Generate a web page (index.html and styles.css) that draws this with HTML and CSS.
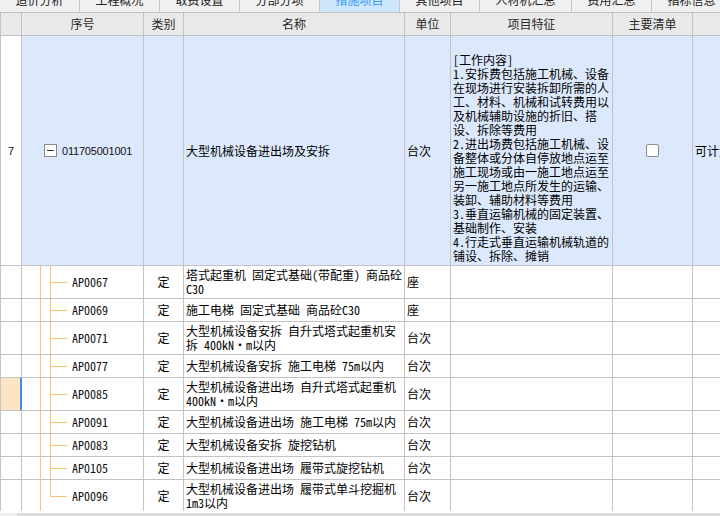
FILE: index.html
```html
<!DOCTYPE html>
<html lang="zh-CN">
<head>
<meta charset="utf-8">
<title>措施项目</title>
<link rel="stylesheet" href="styles.css">
</head>
<body>
<div class="tabs">
  <div class="tab"><span>造价分析</span></div>
  <div class="tab"><span>工程概况</span></div>
  <div class="tab"><span>取费设置</span></div>
  <div class="tab"><span>分部分项</span></div>
  <div class="tab active"><span>措施项目</span></div>
  <div class="tab"><span>其他项目</span></div>
  <div class="tab wide"><span>人材机汇总</span></div>
  <div class="tab"><span>费用汇总</span></div>
  <div class="tab"><span>指标信息</span></div>
</div>
<div class="sheet">
  <div class="row head">
    <div class="c"></div>
    <div class="c">序号</div>
    <div class="c">类别</div>
    <div class="c">名称</div>
    <div class="c">单位</div>
    <div class="c">项目特征</div>
    <div class="c">主要清单</div>
    <div class="c"></div>
  </div>
  <div class="row parent">
    <div class="c num">7</div>
    <div class="c ptree"><span class="toggle"></span><span class="pcode">011705001001</span></div>
    <div class="c"></div>
    <div class="c txt">大型机械设备进出场及安拆</div>
    <div class="c txt">台次</div>
    <div class="c txt feat">[工作内容]<br>1.安拆费包括施工机械、设备<br>在现场进行安装拆卸所需的人<br>工、材料、机械和试转费用以<br>及机械辅助设施的折旧、搭<br>设、拆除等费用<br>2.进出场费包括施工机械、设<br>备整体或分体自停放地点运至<br>施工现场或由一施工地点运至<br>另一施工地点所发生的运输、<br>装卸、辅助材料等费用<br>3.垂直运输机械的固定装置、<br>基础制作、安装<br>4.行走式垂直运输机械轨道的<br>铺设、拆除、摊销</div>
    <div class="c mid"><span class="chk"></span></div>
    <div class="c txt">可计量</div>
  </div>
  <div class="row h2">
    <div class="c num"></div>
    <div class="c tree">AP0067</div>
    <div class="c mid txt">定</div>
    <div class="c txt">塔式起重机 固定式基础(带配重) 商品砼<br>C30</div>
    <div class="c txt">座</div>
    <div class="c"></div><div class="c"></div><div class="c"></div>
  </div>
  <div class="row h1">
    <div class="c num"></div>
    <div class="c tree">AP0069</div>
    <div class="c mid txt">定</div>
    <div class="c txt">施工电梯 固定式基础 商品砼C30</div>
    <div class="c txt">座</div>
    <div class="c"></div><div class="c"></div><div class="c"></div>
  </div>
  <div class="row h2">
    <div class="c num"></div>
    <div class="c tree">AP0071</div>
    <div class="c mid txt">定</div>
    <div class="c txt">大型机械设备安拆 自升式塔式起重机安<br>拆 400kN·m以内</div>
    <div class="c txt">台次</div>
    <div class="c"></div><div class="c"></div><div class="c"></div>
  </div>
  <div class="row h1">
    <div class="c num"></div>
    <div class="c tree">AP0077</div>
    <div class="c mid txt">定</div>
    <div class="c txt">大型机械设备安拆 施工电梯 75m以内</div>
    <div class="c txt">台次</div>
    <div class="c"></div><div class="c"></div><div class="c"></div>
  </div>
  <div class="row h2">
    <div class="c num sel"></div>
    <div class="c tree">AP0085</div>
    <div class="c mid txt">定</div>
    <div class="c txt">大型机械设备进出场 自升式塔式起重机<br>400kN·m以内</div>
    <div class="c txt">台次</div>
    <div class="c"></div><div class="c"></div><div class="c"></div>
  </div>
  <div class="row h1">
    <div class="c num"></div>
    <div class="c tree">AP0091</div>
    <div class="c mid txt">定</div>
    <div class="c txt">大型机械设备进出场 施工电梯 75m以内</div>
    <div class="c txt">台次</div>
    <div class="c"></div><div class="c"></div><div class="c"></div>
  </div>
  <div class="row h1">
    <div class="c num"></div>
    <div class="c tree">AP0083</div>
    <div class="c mid txt">定</div>
    <div class="c txt">大型机械设备安拆 旋挖钻机</div>
    <div class="c txt">台次</div>
    <div class="c"></div><div class="c"></div><div class="c"></div>
  </div>
  <div class="row h1">
    <div class="c num"></div>
    <div class="c tree">AP0105</div>
    <div class="c mid txt">定</div>
    <div class="c txt">大型机械设备进出场 履带式旋挖钻机</div>
    <div class="c txt">台次</div>
    <div class="c"></div><div class="c"></div><div class="c"></div>
  </div>
  <div class="row h2">
    <div class="c num"></div>
    <div class="c tree last">AP0096</div>
    <div class="c mid txt">定</div>
    <div class="c txt">大型机械设备进出场 履带式单斗挖掘机<br>1m3以内</div>
    <div class="c txt">台次</div>
    <div class="c"></div><div class="c"></div><div class="c"></div>
  </div>
</div>
<div class="hscroll"><div class="thumb"></div></div>
</body>
</html>
```
FILE: styles.css
```css
html, body {
  margin: 0;
  padding: 0;
}
body {
  width: 720px;
  height: 516px;
  overflow: hidden;
  background: #ffffff;
  font-family: "Noto Sans CJK SC", sans-serif;
  font-size: 12px;
  color: #111111;
}

/* tab strip */
.tabs {
  display: flex;
  height: 13px;
  box-sizing: border-box;
  border-bottom: 1px solid #c2c2c2;
  background: #f0f0f0;
  overflow: hidden;
}
.tab {
  flex: none;
  width: 80px;
  box-sizing: border-box;
  border-right: 1px solid #c6c6c6;
  text-align: center;
  color: #222222;
  overflow: hidden;
}
.tab span {
  display: block;
  margin-top: -6px;
  line-height: 12px;
  white-space: nowrap;
}
.tab.wide { width: 92px; }
.tab.active {
  background: #cce6fc;
  color: #3a9af2;
}

/* grid */
.sheet {
  height: 498px;
  overflow: hidden;
}
.row {
  display: grid;
  grid-template-columns: 21px 122px 40px 221px 46px 162px 80px 100px;
  width: 793px;
  box-sizing: border-box;
  border-left: 1px solid #c3c3c3;
  border-bottom: 1px solid #c3c3c3;
}
.c {
  box-sizing: border-box;
  border-right: 1px solid #c3c3c3;
  display: flex;
  align-items: center;
  padding: 0 2px;
  overflow: hidden;
  white-space: nowrap;
  line-height: 14px;
}
.head {
  height: 23px;
  background: #e9e9e9;
}
.head .c {
  justify-content: center;
  color: #2a2a2a;
}
.parent { height: 230px; }
.h2 { height: 33px; }
.h1 { height: 23px; }

.parent .c { background: #dce8fb; }
.parent .c.num { background: #ffffff; }

.txt {
  font-family: "Noto Sans Mono CJK SC", "Noto Sans CJK SC", sans-serif;
  color: #000000;
}
.mid { justify-content: center; }
.num {
  justify-content: center;
  padding: 0;
  font-family: "Liberation Sans", sans-serif;
  font-size: 11px;
}
.num.sel {
  background: #fde4c5;
  border-right: 2px solid #3d8ef0;
}
.feat {
  align-items: flex-end;
  padding-bottom: 2px;
}

/* tree connectors */
.ptree {
  padding-left: 22px;
  background-image:
    linear-gradient(#fcc470, #fcc470),
    linear-gradient(#fcc470, #fcc470),
    linear-gradient(#fcc470, #fcc470);
  background-repeat: no-repeat;
  background-position: 18px 0, 19px 50%, 28px 100%;
  background-size: 1px 100%, 3px 1px, 1px calc(50% - 7px);
}
.toggle {
  flex: none;
  display: flex;
  align-items: center;
  justify-content: center;
  width: 13px;
  height: 13px;
  box-sizing: border-box;
  border: 1px solid #8a8a8a;
  background: #ffffff;
}
.toggle::before {
  content: "";
  width: 7px;
  height: 1px;
  background: #333333;
}
.pcode {
  margin-left: 5px;
  font-family: "Liberation Sans", sans-serif;
  font-size: 11px;
  letter-spacing: -0.2px;
  color: #111111;
}
.tree {
  padding-left: 50px;
  font-family: "Noto Sans Mono CJK SC", "Liberation Mono", monospace;
  font-size: 12px;
  color: #111111;
  background-image:
    linear-gradient(#fcc470, #fcc470),
    linear-gradient(#fcc470, #fcc470),
    linear-gradient(#fcc470, #fcc470);
  background-repeat: no-repeat;
  background-position: 18px 0, 28px 0, 28px 50%;
  background-size: 1px 100%, 1px 100%, 17px 1px;
}
.tree.last {
  background-size: 1px 100%, 1px 50%, 17px 1px;
}

.chk {
  width: 13px;
  height: 13px;
  box-sizing: border-box;
  border: 1px solid #8c8c8c;
  border-radius: 2px;
  background: #ffffff;
}

/* horizontal scrollbar */
.hscroll {
  display: flex;
  margin-top: 2px;
  height: 3px;
  padding-left: 17px;
  background: #efefef;
}
.thumb {
  flex: 1;
  background: #dcdcdc;
}
```
